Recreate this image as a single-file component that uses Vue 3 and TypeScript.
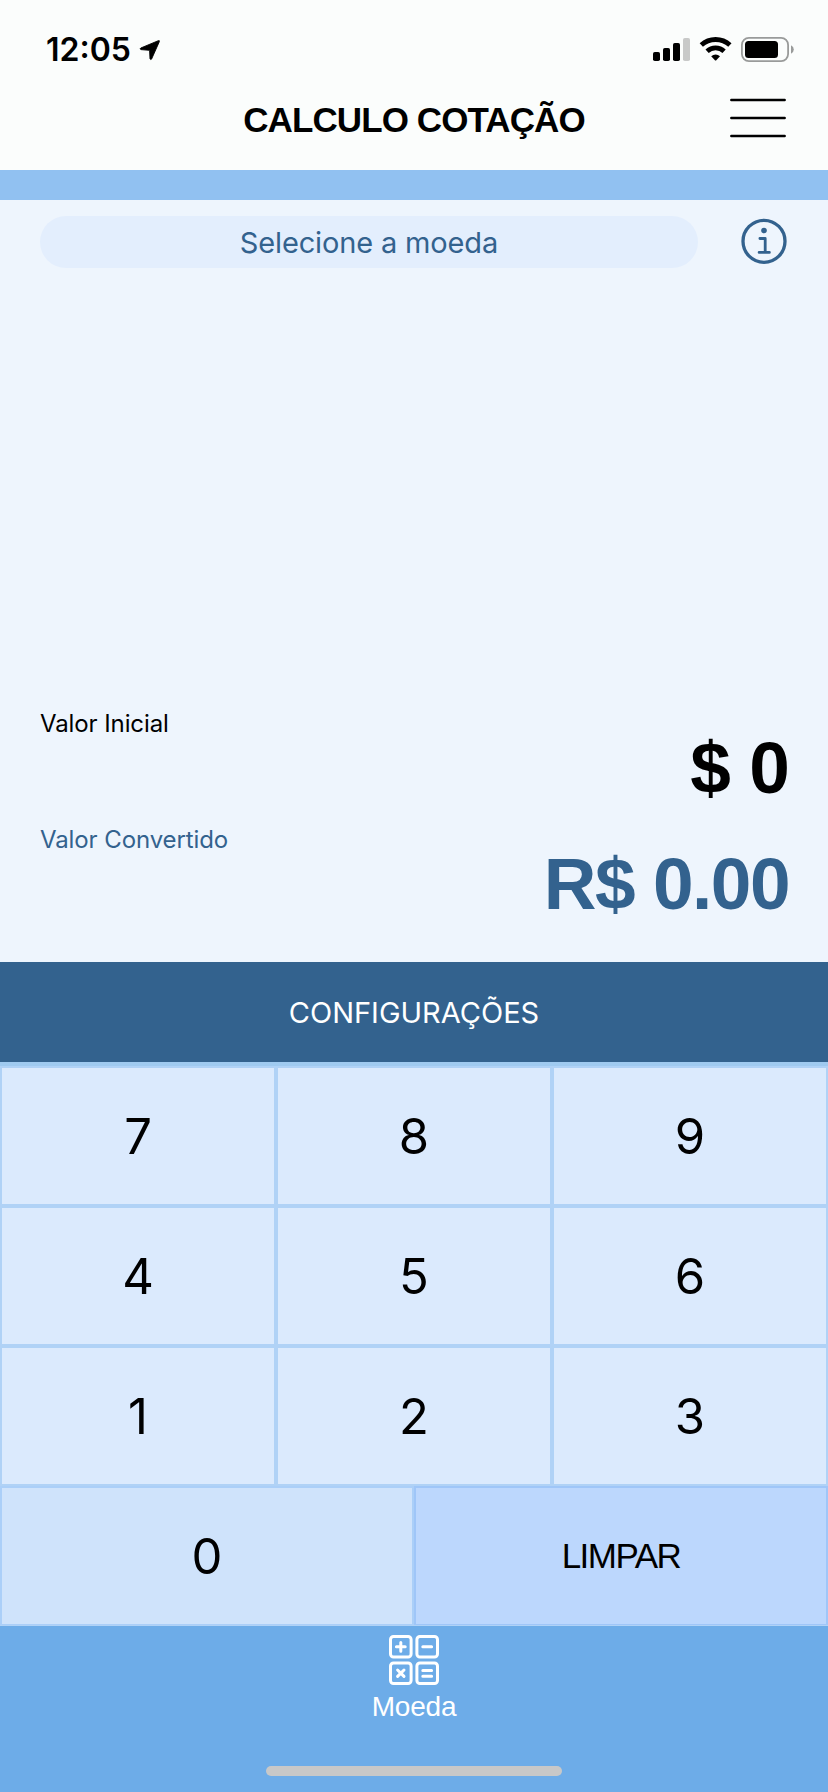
<script setup lang="ts">
import { computed, ref } from 'vue'

const amount = ref<string>('0')
const rate = ref<number>(0)

const digits: string[] = ['7', '8', '9', '4', '5', '6', '1', '2', '3']
const converted = computed<string>(() => (Number(amount.value) * rate.value).toFixed(2))

function press(digit: string): void {
  amount.value = amount.value === '0' ? digit : amount.value + digit
}

function clear(): void {
  amount.value = '0'
}
</script>

<template>
  <div class="screen">
    <div class="status">
      <span class="time">12:05</span>
      <svg class="location" width="22" height="22" viewBox="0 0 22 22">
        <path d="M1.8 9 19.3 1.7Q20.8 1.2 20.3 2.7L12.6 20Q11.6 21.2 11 19.8L10.6 11.5Q10.6 11.3 10.4 11.3L1.8 10.6Q.4 9.9 1.8 9Z" stroke="#000" stroke-width=".9" stroke-linejoin="round" />
      </svg>
      <svg class="indicators" width="144" height="28" viewBox="0 0 144 28">
        <rect x="2" y="16" width="7" height="9" rx="1.8" />
        <rect x="12" y="12" width="7" height="13" rx="1.8" />
        <rect x="22" y="7" width="7" height="18" rx="1.8" />
        <rect x="32" y="2" width="7" height="23" rx="1.8" fill="#c8c9c8" />
        <g fill="none" stroke="#000" stroke-width="4.8">
          <path d="M50.3 9.1A21 21 0 0 1 78.9 9.1" />
          <path d="M56.1 15.2A12.6 12.6 0 0 1 73.1 15.2" />
        </g>
        <path d="M60.2 20.2A6.6 6.6 0 0 1 69 20.2L65.3 24.3Q64.6 24.9 63.9 24.3Z" />
        <rect x="90.9" y="1.9" width="46.2" height="23.2" rx="7" fill="none" stroke="#999b9a" stroke-width="1.8" />
        <rect x="94" y="5" width="33" height="17" rx="3.5" />
        <path d="M140 9.3Q142.8 10.8 142.8 13.5Q142.8 16.2 140 17.7Z" fill="#999b9a" />
      </svg>
    </div>

    <header class="header">
      <h1 class="title">CALCULO COTAÇÃO</h1>
      <button class="menu" aria-label="Menu">
        <svg width="56" height="40" viewBox="0 0 56 40">
          <path d="M1.3 2H54.7M1.3 20H54.7M1.3 38H54.7" stroke="#000" stroke-width="2.4" stroke-linecap="round" />
        </svg>
      </button>
    </header>

    <main class="display">
      <div class="picker">
        <button class="select">Selecione a moeda</button>
        <button class="info" aria-label="Info">
          <svg width="46" height="46" viewBox="0 0 46 46" fill="none" stroke="#33628e">
            <circle cx="23" cy="23.3" r="21" stroke-width="3.3" />
            <circle cx="23" cy="12.5" r="2.8" fill="#33628e" stroke="none" />
            <path d="M18.9 20.5H24.2V34.3M18.1 34.4H28.4" stroke-width="2.8" stroke-linecap="round" stroke-linejoin="round" />
          </svg>
        </button>
      </div>
      <div class="values">
        <section class="value">
          <span class="label">Valor Inicial</span>
          <strong class="number initial">$ {{ amount }}</strong>
        </section>
        <section class="value accent">
          <span class="label">Valor Convertido</span>
          <strong class="number">R$ {{ converted }}</strong>
        </section>
      </div>
    </main>

    <button class="settings">CONFIGURAÇÕES</button>

    <div class="keypad">
      <button v-for="d in digits" :key="d" class="key" @click="press(d)">{{ d }}</button>
      <button class="key zero" @click="press('0')">0</button>
      <button class="key clear" @click="clear">LIMPAR</button>
    </div>

    <footer class="tabs">
      <svg width="50" height="50" viewBox="0 0 50 50" fill="none" stroke="#fff" stroke-width="3" stroke-linecap="round">
        <rect x="1.5" y="1.5" width="20.6" height="20.6" rx="3" />
        <rect x="27.9" y="1.5" width="20.6" height="20.6" rx="3" />
        <rect x="1.5" y="27.9" width="20.6" height="20.6" rx="3" />
        <rect x="27.9" y="27.9" width="20.6" height="20.6" rx="3" />
        <path d="M7.4 11.8H16.2M11.8 7.4V16.2M33.8 11.8H42.6M8.6 35 15 41.4M15 35 8.6 41.4M33.8 35.4H42.6M33.8 41.2H42.6" />
      </svg>
      <span class="tab-label">Moeda</span>
      <span class="home"></span>
    </footer>
  </div>
</template>

<style>
body {
  margin: 0;
}
</style>

<style scoped>
.screen {
  display: flex;
  flex-direction: column;
  width: 828px;
  height: 1792px;
  background: #eef5fd;
  color: #000;
  font-family: Inter, "Liberation Sans", sans-serif;
  overflow: hidden;
}

button {
  margin: 0;
  padding: 0;
  border: 0;
  background: none;
  color: inherit;
  font: inherit;
}

svg {
  display: block;
}

.status {
  display: flex;
  align-items: flex-start;
  height: 88px;
  padding: 0 33px 0 46px;
  background: #fbfdfc;
}

.time {
  width: 93px;
  padding-top: 30px;
  font-size: 32px;
  line-height: 40px;
  font-weight: 600;
}

.location {
  margin-top: 39px;
}

.indicators {
  margin: 36px 0 0 auto;
}

.header {
  display: grid;
  grid-template-columns: 1fr auto 1fr;
  align-items: start;
  height: 82px;
  padding: 0 42px;
  background: #fbfdfc;
  border-bottom: 30px solid #91c1f1;
}

.title {
  grid-column: 2;
  margin: 12px 0 0;
  font: bold 35px/40px "Liberation Sans", sans-serif;
  letter-spacing: -0.9px;
}

.menu {
  justify-self: end;
  margin-top: 10px;
}

.display {
  display: flex;
  flex-direction: column;
  justify-content: space-between;
  height: 762px;
}

.picker {
  display: flex;
  justify-content: space-between;
  padding: 16px 41px 0 40px;
}

.select {
  width: 658px;
  height: 52px;
  border-radius: 26px;
  background: #e3eefd;
  color: #33628e;
  font-size: 29px;
  letter-spacing: -0.15px;
}

.info {
  align-self: flex-start;
  margin-top: 2px;
}

.values {
  padding: 0 41px;
}

.value {
  display: flex;
  flex-direction: column;
  height: 116px;
}

.values .value:last-child {
  height: 130px;
}

.label {
  height: 17px;
  margin: -7px 0 0 -1px;
  font-size: 24px;
  line-height: 30px;
  letter-spacing: -0.1px;
}

.accent {
  color: #33628e;
}

.number {
  margin-right: -2px;
  font: bold 73px/84px "Liberation Sans", sans-serif;
  letter-spacing: -1.5px;
  text-align: right;
}

.number.initial {
  letter-spacing: -0.9px;
}

.settings {
  height: 100px;
  background: #33628e;
  color: #fff;
  font-size: 29px;
}

.keypad {
  display: grid;
  grid-template-columns: repeat(6, 138px);
  grid-template-rows: repeat(3, 140px) 139px;
  padding-top: 4px;
  border-bottom: 1px solid #b0d2f6;
  background: #9fcaf0;
}

.key {
  grid-column: span 2;
  box-sizing: border-box;
  border: 2px solid #b0d2f6;
  background: #dbeafd;
  font-size: 49px;
}

.zero {
  grid-column: span 3;
  border-color: #abcff8;
  border-bottom-width: 1px;
  background: #cfe3fb;
}

.clear {
  grid-column: span 3;
  border-color: #9fc6f8;
  border-bottom-width: 1px;
  background: #bcd7fd;
  font: 35px "Liberation Sans", sans-serif;
  letter-spacing: -1.5px;
}

.tabs {
  display: flex;
  flex: 1;
  flex-direction: column;
  align-items: center;
  padding-top: 9px;
  background: #6dace8;
}

.tab-label {
  margin-top: 6px;
  color: #fff;
  font: 28px/32px "Liberation Sans", sans-serif;
  letter-spacing: -0.2px;
}

.home {
  width: 296px;
  height: 10px;
  margin-top: 43px;
  border-radius: 5px;
  background: #c8c8c8;
}
</style>
